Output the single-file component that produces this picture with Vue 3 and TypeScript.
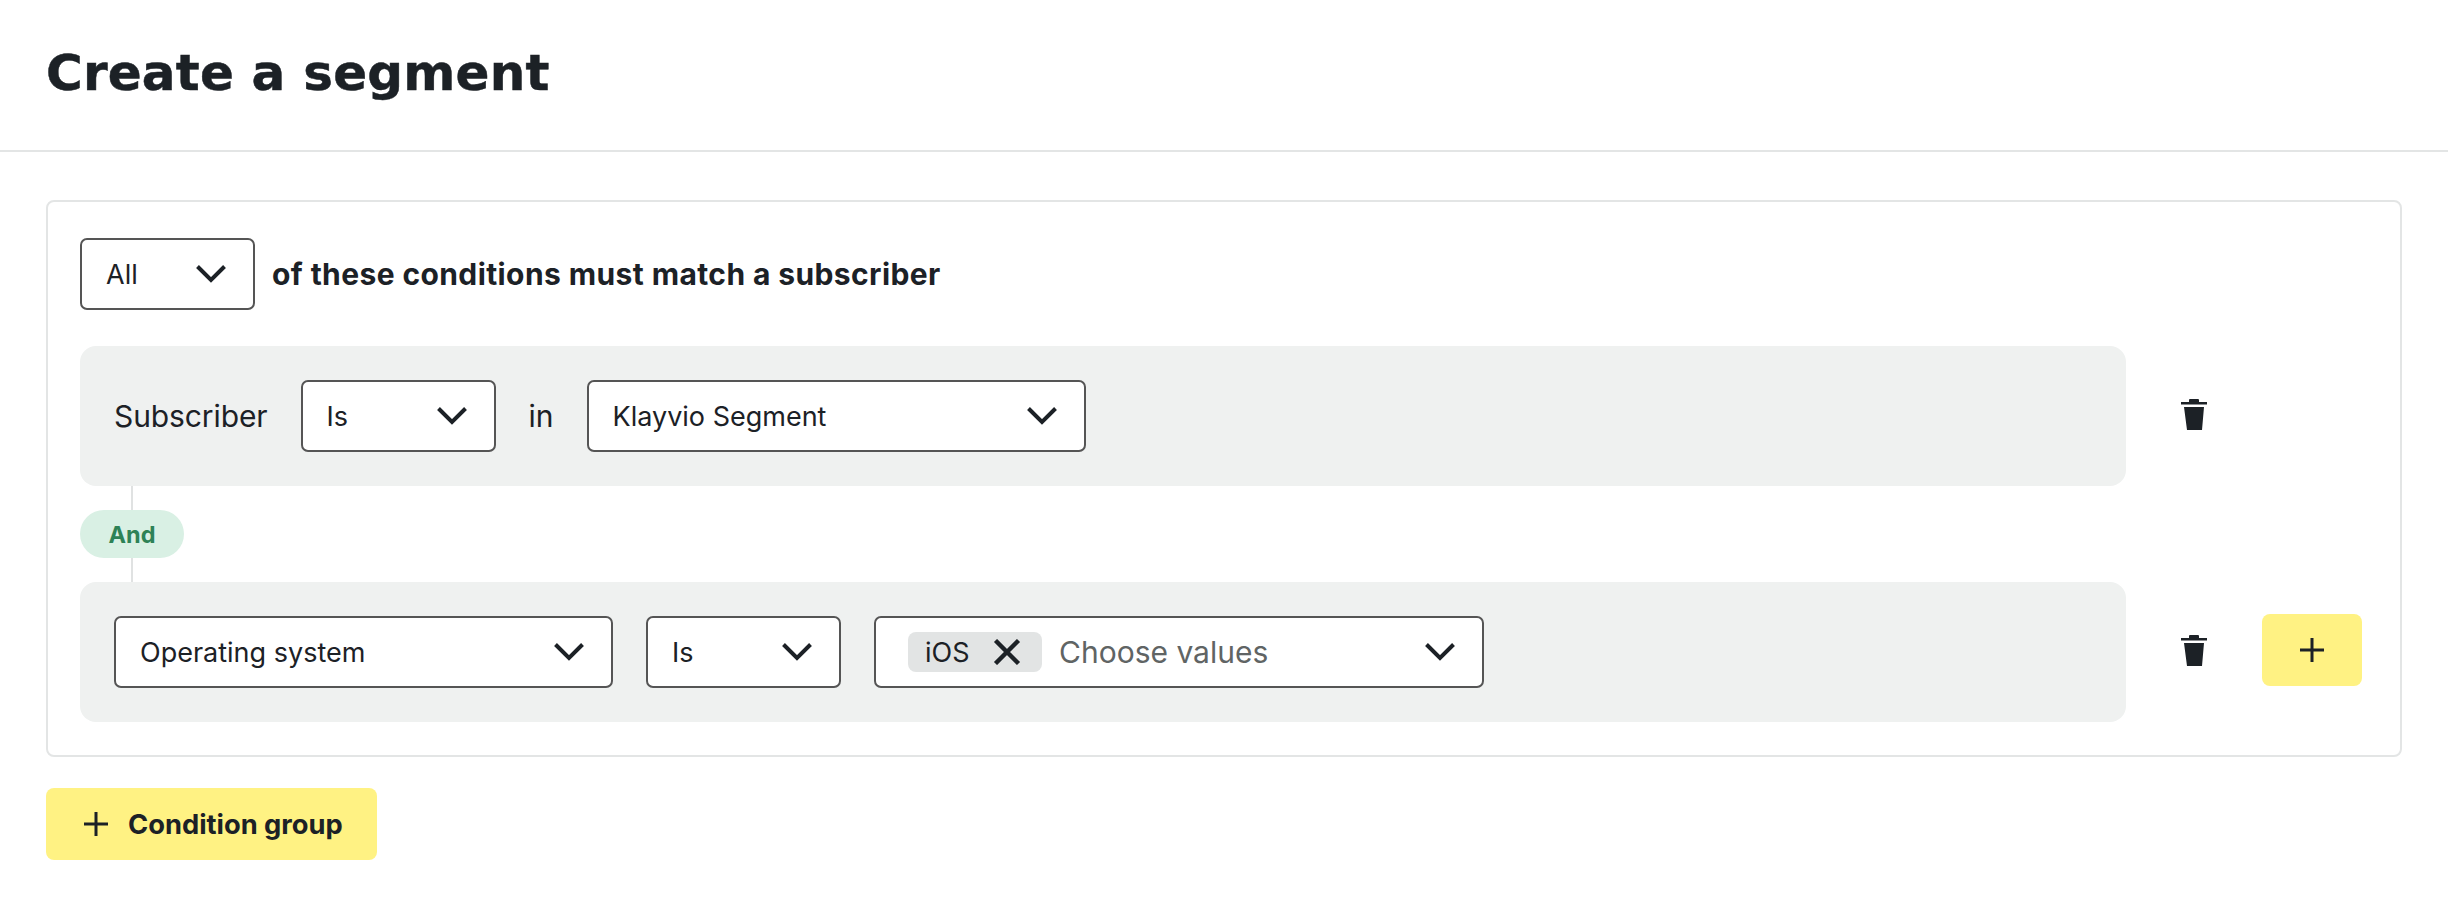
<script setup lang="ts">
const tick = 'M1.5 1.5 L15 15 L28.5 1.5'
</script>

<template>
  <div class="page">
    <header class="head"><h1>Create a segment</h1></header>
    <main class="main">
      <section class="card">
        <div class="intro">
          <div class="select all"><span>All</span><svg class="chev" viewBox="0 0 30 18"><path :d="tick" /></svg></div>
          <strong>of these conditions must match a subscriber</strong>
        </div>
        <div class="grid">
          <div class="row">
            <span class="label first">Subscriber</span>
            <div class="select is"><span>Is</span><svg class="chev" viewBox="0 0 30 18"><path :d="tick" /></svg></div>
            <span class="label">in</span>
            <div class="select klaviyo"><span>Klayvio Segment</span><svg class="chev" viewBox="0 0 30 18"><path :d="tick" /></svg></div>
          </div>
          <div class="actions">
            <svg class="trash" viewBox="0 0 26 31"><path d="M8 3V1.2C8 .5 8.5 0 9.2 0h7.6c.7 0 1.2.5 1.2 1.2V3h8v2.6H0V3zM3 8h20l-2 23H6z" /></svg>
          </div>
          <div class="link"><i></i><span class="and">And</span><i></i></div>
          <div></div>
          <div class="row">
            <div class="select os"><span>Operating system</span><svg class="chev" viewBox="0 0 30 18"><path :d="tick" /></svg></div>
            <div class="select is"><span>Is</span><svg class="chev" viewBox="0 0 30 18"><path :d="tick" /></svg></div>
            <div class="select values">
              <span class="chip">iOS<svg class="x" viewBox="0 0 28 26"><path d="M2.5 1.5 L25.5 24.5 M25.5 1.5 L2.5 24.5" /></svg></span>
              <span class="hint">Choose values</span>
              <svg class="chev" viewBox="0 0 30 18"><path :d="tick" /></svg>
            </div>
          </div>
          <div class="actions">
            <svg class="trash" viewBox="0 0 26 31"><path d="M8 3V1.2C8 .5 8.5 0 9.2 0h7.6c.7 0 1.2.5 1.2 1.2V3h8v2.6H0V3zM3 8h20l-2 23H6z" /></svg>
            <button class="add" type="button"><svg class="plus" viewBox="0 0 24 24"><path d="M12 0V24M0 12H24" /></svg></button>
          </div>
        </div>
      </section>
      <button class="group" type="button"><svg class="plus" viewBox="0 0 24 24"><path d="M12 0V24M0 12H24" /></svg>Condition group</button>
    </main>
  </div>
</template>

<style scoped>
.page { width: 2448px; height: 908px; background: #fff; color: #1c2126; font-family: Inter, "Liberation Sans", sans-serif; overflow: hidden; }
.head { box-sizing: border-box; border-bottom: 2px solid #e3e5e5; padding: 46px 46px 0; height: 152px; }
h1 { margin: 0; font-family: "DejaVu Sans", Inter, sans-serif; font-size: 50px; line-height: 54px; font-weight: 700; letter-spacing: 0.2px; -webkit-text-stroke: 0.5px #1c2126; }
.main { padding: 48px 46px 0; }
.card { width: 2356px; box-sizing: border-box; height: 557px; border: 2px solid #e3e5e5; border-radius: 8px; padding: 36px 32px 0; }
.intro { display: flex; align-items: center; gap: 17px; margin-bottom: 36px; font-size: 30px; }
.intro strong { font-weight: 700; letter-spacing: 0.4px; }
.select { height: 72px; box-sizing: border-box; background: #fff; border: 2px solid #555; border-radius: 7px; display: flex; align-items: center; justify-content: space-between; padding: 0 27px 0 24px; font-size: 27px; flex: none; }
.all { width: 175px; }
.is { width: 195px; }
.klaviyo { width: 499px; }
.os { width: 499px; }
.values { width: 610px; padding-left: 32px; justify-content: flex-start; }
.chev { width: 30px; height: 18px; fill: none; stroke: #1c2126; stroke-width: 4; flex: none; }
.grid { display: grid; grid-template-columns: 2046px 1fr; }
.row { height: 140px; box-sizing: border-box; background: #eff1f0; border-radius: 16px; padding: 0 34px; display: flex; align-items: center; gap: 33px; font-size: 30px; }
.label.first { letter-spacing: -0.1px; }
.actions { display: flex; align-items: center; gap: 55px; padding-left: 55px; padding-bottom: 4px; }
.trash { width: 26px; height: 31px; fill: #1c2126; flex: none; }
.link { width: 104px; height: 96px; display: flex; flex-direction: column; align-items: center; }
.link i { width: 2px; flex: 1; background: #e0e2e2; }
.and { width: 104px; height: 48px; border-radius: 24px; background: #d9f0e4; color: #2e8256; font-size: 23.5px; font-weight: 700; display: flex; align-items: center; justify-content: center; }
.chip { width: 134px; height: 40px; box-sizing: border-box; background: #e2e4e4; border-radius: 8px; display: flex; align-items: center; justify-content: space-between; padding: 0 21px 0 17px; font-size: 27px; flex: none; }
.x { width: 28px; height: 26px; fill: none; stroke: #1c2126; stroke-width: 4.4; }
.hint { margin-left: 17px; color: #606464; font-size: 30px; flex: 1; }
.add, .group { border: 0; background: #fff283; border-radius: 8px; color: inherit; font: inherit; padding: 0; display: flex; align-items: center; justify-content: center; }
.add { width: 100px; height: 72px; }
.plus { width: 24px; height: 24px; fill: none; stroke: #1c2126; stroke-width: 3; flex: none; }
.group { width: 331px; height: 72px; margin-top: 31px; gap: 20px; padding-left: 38px; justify-content: flex-start; font-size: 27.3px; font-weight: 700; }
</style>
